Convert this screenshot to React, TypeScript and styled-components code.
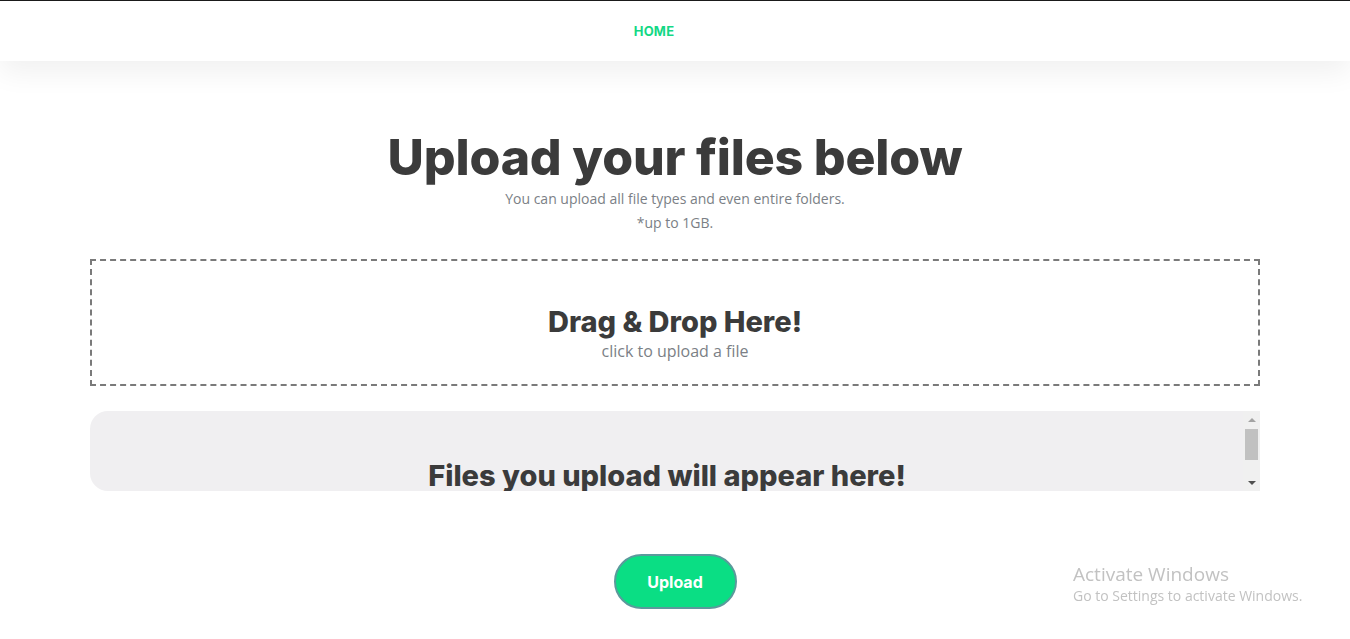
import React from 'react';
import styled, { createGlobalStyle } from 'styled-components';

const GlobalStyle = createGlobalStyle`
  html, body {
    margin: 0;
    padding: 0;
    background: #ffffff;
  }
  body {
    border-top: 1px solid #1a1a1a;
    font-family: 'Open Sans', 'Noto Sans', sans-serif;
    overflow: hidden;
  }
`;

const Nav = styled.nav`
  height: 60px;
  display: flex;
  align-items: center;
  justify-content: center;
  background: #ffffff;
  box-shadow: 0 12px 28px rgba(0, 0, 0, 0.06);
  position: relative;
  z-index: 1;
`;

const NavLink = styled.a`
  font-family: Inter, 'Noto Sans', sans-serif;
  font-weight: 700;
  font-size: 13px;
  color: #14d885;
  text-decoration: none;
  letter-spacing: 0.2px;
  margin-right: 42px;
`;

const Main = styled.main`
  display: flex;
  flex-direction: column;
  align-items: center;
  padding: 64px 90px 0 90px;
`;

const Title = styled.h1`
  margin: 0 0 -2px;
  font-family: Inter, 'Noto Sans', sans-serif;
  font-weight: 800;
  font-size: 50px;
  line-height: 64px;
  letter-spacing: -0.2px;
  color: #3b3b3b;
`;

const Sub = styled.p`
  margin: 0;
  font-size: 14px;
  line-height: 24px;
  color: #7b7f86;
`;

const DropZone = styled.div`
  margin-top: 24px;
  width: 100%;
  box-sizing: border-box;
  height: 127px;
  border: 2px dashed #7a7a7a;
  display: flex;
  flex-direction: column;
  align-items: center;
  justify-content: center;
  padding-top: 20px;
  gap: 2px;
  cursor: pointer;
`;

const BoldHeading = styled.h2`
  margin: 0;
  font-family: Inter, 'Noto Sans', sans-serif;
  font-weight: 800;
  font-size: 29px;
  line-height: 34px;
  color: #3b3b3b;
`;

const Hint = styled.span`
  font-size: 16px;
  line-height: 20px;
  color: #7b7f86;
`;

const FileList = styled.div`
  position: relative;
  margin-top: 25px;
  width: 100%;
  height: 80px;
  background: #f0eff1;
  border-radius: 18px 0 0 18px;
  overflow: hidden;
  text-align: center;
`;

const FileListInner = styled.div`
  padding: 48px 16px 60px 0;
`;

const ScrollTrack = styled.div`
  position: absolute;
  top: 0;
  right: 0;
  bottom: 0;
  width: 17px;
  background: #f0f0f0;
  display: flex;
  flex-direction: column;
  align-items: center;
`;

const ScrollArrow = styled.div<{ down?: boolean }>`
  width: 0;
  height: 0;
  margin-top: ${(p) => (p.down ? 'auto' : '7px')};
  margin-bottom: ${(p) => (p.down ? '6px' : '0')};
  border-left: 4px solid transparent;
  border-right: 4px solid transparent;
  ${(p) =>
    p.down
      ? 'border-top: 4px solid #505050;'
      : 'border-bottom: 4px solid #a3a3a3;'}
`;

const ScrollThumb = styled.div`
  margin-top: 7px;
  width: 13px;
  height: 31px;
  background: #c1c1c1;
`;

const Footer = styled.div`
  display: flex;
  justify-content: center;
  margin-top: 63px;
`;

const UploadButton = styled.button`
  width: 123px;
  height: 55px;
  border-radius: 28px;
  border: 2px solid #5b9a9c;
  background: #0ade84;
  color: #ffffff;
  font-family: Inter, 'Noto Sans', sans-serif;
  font-weight: 700;
  font-size: 16px;
  cursor: pointer;
`;

const Watermark = styled.div`
  position: fixed;
  left: 1073px;
  top: 562px;
  font-family: 'Open Sans', 'Noto Sans', sans-serif;
  color: #c2c2c2;
  pointer-events: none;
`;

const WmTitle = styled.div`
  font-size: 19px;
  line-height: 24px;
`;

const WmText = styled.div`
  font-size: 14px;
  line-height: 20px;
`;

export default function App() {
  return (
    <>
      <GlobalStyle />
      <Nav>
        <NavLink href="#">HOME</NavLink>
      </Nav>
      <Main>
        <Title>Upload your files below</Title>
        <Sub>You can upload all file types and even entire folders.</Sub>
        <Sub>*up to 1GB.</Sub>
        <DropZone>
          <BoldHeading>Drag &amp; Drop Here!</BoldHeading>
          <Hint>click to upload a file</Hint>
        </DropZone>
        <FileList>
          <FileListInner>
            <BoldHeading>Files you upload will appear here!</BoldHeading>
          </FileListInner>
          <ScrollTrack>
            <ScrollArrow />
            <ScrollThumb />
            <ScrollArrow down />
          </ScrollTrack>
        </FileList>
        <Footer>
          <UploadButton>Upload</UploadButton>
        </Footer>
      </Main>
      <Watermark>
        <WmTitle>Activate Windows</WmTitle>
        <WmText>Go to Settings to activate Windows.</WmText>
      </Watermark>
    </>
  );
}
